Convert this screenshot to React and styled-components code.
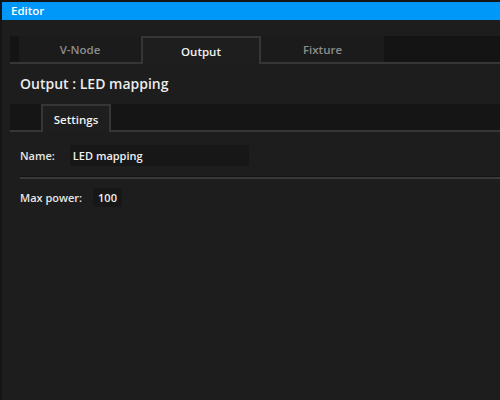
import React from "react";
import styled, { createGlobalStyle } from "styled-components";

const Global = createGlobalStyle`
  html, body { margin: 0; padding: 0; background: #1c1c1c; }
  body { font-family: "Open Sans", "Noto Sans", sans-serif; }
  #root { width: 500px; height: 400px; overflow: hidden; }
`;

const Window = styled.div`
  width: 500px;
  height: 400px;
  box-sizing: border-box;
  background: #1d1d1d;
  border-left: 2px solid #151515;
  border-top: 2px solid #151515;
  display: flex;
  flex-direction: column;
`;

const TitleBar = styled.div`
  height: 18px;
  background: #0098f8;
  color: #ffffff;
  font-size: 11.5px;
  font-weight: 600;
  line-height: 18px;
  padding-left: 9px;
`;

const Body = styled.div`
  flex: 1;
  padding: 16px 0 0 8px;
  display: flex;
  flex-direction: column;
`;

const TabBar = styled.div`
  display: flex;
  background: ${(p) => p.$bg};
  border-bottom: 2px solid #363636;
  padding-left: ${(p) => p.$indent}px;
  height: ${(p) => p.$height}px;
  box-sizing: border-box;
`;

const Tab = styled.div`
  width: ${(p) => p.$width}px;
  box-sizing: border-box;
  display: flex;
  align-items: center;
  justify-content: center;
  font-size: 11.5px;
  font-weight: 600;
  padding-top: 1px;
  color: ${(p) => (p.$active ? "#f2f2f2" : "#8c8c8c")};
  background: ${(p) => (p.$active ? "#1e1e1e" : "#1b1b1b")};
  border: ${(p) => (p.$active ? "2px solid #363636" : "none")};
  border-bottom: none;
  margin-bottom: ${(p) => (p.$active ? "-2px" : "0")};
`;

const Heading = styled.div`
  color: #ececec;
  font-size: 14px;
  font-weight: 600;
  padding: 10px 0 0 10px;
  height: 40px;
  box-sizing: border-box;
`;

const Form = styled.div`
  display: flex;
  flex-direction: column;
  padding: 13px 0 0 10px;
`;

const Row = styled.div`
  display: flex;
  align-items: center;
  gap: ${(p) => p.$gap}px;
  font-size: 11px;
  font-weight: 600;
  color: #e6e6e6;
`;

const Field = styled.div`
  width: ${(p) => p.$width}px;
  height: ${(p) => p.$height}px;
  background: #171717;
  border-radius: 2px;
  display: flex;
  align-items: center;
  padding-left: ${(p) => p.$pad}px;
  box-sizing: border-box;
  color: #f0f0f0;
`;

const Divider = styled.div`
  height: 2px;
  background: #3a3a3a;
  border-top: 1px solid #141414;
  margin: 10px 0 9px;
`;

export default function App() {
  return (
    <>
      <Global />
      <Window>
        <TitleBar>Editor</TitleBar>
        <Body>
          <TabBar $bg="#141414" $indent={9} $height={28}>
            <Tab $width={122}>V-Node</Tab>
            <Tab $width={120} $active>Output</Tab>
            <Tab $width={123}>Fixture</Tab>
          </TabBar>
          <Heading>Output : LED mapping</Heading>
          <TabBar $bg="#151515" $indent={31} $height={28}>
            <Tab $width={70} $active>Settings</Tab>
          </TabBar>
          <Form>
            <Row $gap={15}>
              <span>Name:</span>
              <Field $width={179} $height={21} $pad={3}>LED mapping</Field>
            </Row>
            <Divider />
            <Row $gap={11}>
              <span>Max power:</span>
              <Field $width={29} $height={19} $pad={5}>100</Field>
            </Row>
          </Form>
        </Body>
      </Window>
    </>
  );
}
